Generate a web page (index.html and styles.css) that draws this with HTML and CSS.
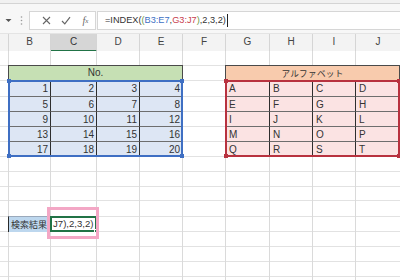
FILE: index.html
```html
<!DOCTYPE html>
<html lang="ja">
<head>
<meta charset="utf-8">
<link rel="stylesheet" href="styles.css">
</head>
<body>
<div class="app">
  <div class="ribbon"></div>
  <div class="fbar">
    <div class="namebox">
      <svg width="7" height="5" viewBox="0 0 7 5"><path d="M0.5 1 L3.5 4 L6.5 1 Z" fill="#555"/></svg>
    </div>
    <div class="sep">
      <svg width="3" height="11" viewBox="0 0 3 11"><circle cx="1.5" cy="2" r="0.8" fill="#9a9a9a"/><circle cx="1.5" cy="5.5" r="0.8" fill="#9a9a9a"/><circle cx="1.5" cy="9" r="0.8" fill="#9a9a9a"/></svg>
    </div>
    <div class="btns">
      <span class="btn"><svg width="9" height="9" viewBox="0 0 9 9"><path d="M1 1 L8 8 M8 1 L1 8" stroke="#666" stroke-width="1.1" fill="none"/></svg></span>
      <span class="btn"><svg width="10" height="9" viewBox="0 0 10 9"><path d="M1 5 L3.8 7.8 L9 1.2" stroke="#666" stroke-width="1.2" fill="none"/></svg></span>
      <span class="btn fx">f<span class="x">x</span></span>
    </div>
    <div class="input">=INDEX(<span class="p">(</span><span class="rb-blue">B3:E7</span>,<span class="rb-red">G3:J7</span><span class="p">)</span>,2,3,2)<span class="caret"></span></div>
  </div>
  <div class="colhead">
    <div class="ch"></div>
    <div class="ch">B</div>
    <div class="ch sel">C</div>
    <div class="ch">D</div>
    <div class="ch">E</div>
    <div class="ch">F</div>
    <div class="ch">G</div>
    <div class="ch">H</div>
    <div class="ch">I</div>
    <div class="ch last">J</div>
  </div>
  <div class="sheet">
    <div class="tbl tbl-no">
      <div class="th th-green">No.</div>
      <div class="td num">1</div><div class="td num">2</div><div class="td num">3</div><div class="td num">4</div>
      <div class="td num">5</div><div class="td num">6</div><div class="td num">7</div><div class="td num">8</div>
      <div class="td num">9</div><div class="td num">10</div><div class="td num">11</div><div class="td num">12</div>
      <div class="td num">13</div><div class="td num">14</div><div class="td num">15</div><div class="td num">16</div>
      <div class="td num">17</div><div class="td num">18</div><div class="td num">19</div><div class="td num">20</div>
      <div class="frame frame-blue">
        <span class="hd tl"></span><span class="hd tr"></span><span class="hd bl"></span><span class="hd br"></span>
      </div>
    </div>
    <div class="tbl tbl-al">
      <div class="th th-orange">アルファベット</div>
      <div class="td txt">A</div><div class="td txt">B</div><div class="td txt">C</div><div class="td txt">D</div>
      <div class="td txt">E</div><div class="td txt">F</div><div class="td txt">G</div><div class="td txt">H</div>
      <div class="td txt">I</div><div class="td txt">J</div><div class="td txt">K</div><div class="td txt">L</div>
      <div class="td txt">M</div><div class="td txt">N</div><div class="td txt">O</div><div class="td txt">P</div>
      <div class="td txt">Q</div><div class="td txt">R</div><div class="td txt">S</div><div class="td txt">T</div>
      <div class="frame frame-red">
        <span class="hd tl"></span><span class="hd tr"></span><span class="hd bl"></span><span class="hd br"></span>
      </div>
    </div>
    <div class="label">検索結果</div>
    <div class="active">J7),2,3,2)<span class="fill"></span></div>
    <div class="annot"></div>
  </div>
</div>
</body>
</html>
```
FILE: styles.css
```css
* {
  box-sizing: border-box;
  margin: 0;
  padding: 0;
}

body {
  margin: 0;
  width: 400px;
  height: 280px;
  overflow: hidden;
  background: #ffffff;
  color: #333333;
  font-family: "Liberation Sans", Arial, "Noto Sans CJK JP", sans-serif;
}

.app {
  width: 400px;
  height: 280px;
  display: flex;
  flex-direction: column;
}

/* ribbon remnant */
.ribbon {
  height: 4px;
  flex: none;
  background: #f1f1f1;
  border-bottom: 1px solid #d4d4d4;
}

/* formula bar */
.fbar {
  height: 29px;
  flex: none;
  background: #f7f7f7;
  display: flex;
  align-items: flex-start;
  padding-top: 7px;
}

.namebox {
  width: 14px;
  height: 19px;
  display: flex;
  align-items: center;
  justify-content: center;
  padding-left: 3px;
}

.sep {
  width: 15px;
  height: 19px;
  display: flex;
  align-items: center;
  justify-content: center;
}

.btns {
  width: 67px;
  height: 19px;
  background: #ffffff;
  border: 1px solid #d6d6d6;
  display: flex;
  align-items: center;
  padding-left: 7px;
}

.btn {
  width: 21px;
  display: flex;
  align-items: center;
  justify-content: center;
}

.fx {
  font-family: "Liberation Serif", serif;
  font-style: italic;
  font-size: 10px;
  color: #666;
  line-height: 10px;
}

.fx .x {
  font-size: 7px;
}

.input {
  flex: 1;
  height: 19px;
  margin-left: 1px;
  background: #ffffff;
  border: 1px solid #d6d6d6;
  border-right: none;
  padding-left: 7px;
  font-size: 9.2px;
  line-height: 17px;
  color: #333;
  display: flex;
  align-items: center;
  white-space: pre;
}

.rb-blue { color: #3d6fc4; }
.rb-red { color: #c8404d; }
.p { color: #6d9b4a; }

.caret {
  display: inline-block;
  width: 1px;
  height: 13px;
  background: #222;
  margin-left: 1px;
}

/* column header */
.colhead {
  height: 18px;
  flex: none;
  display: grid;
  grid-template-columns: 9px 42px 46px 43px 43px 43px 44px 43px 43px 44px;
  background: #f3f3f3;
  border-top: 1px solid #e4e4e4;
}

.ch {
  border-right: 1px solid #d5d5d5;
  border-bottom: 1px solid #c6c6c6;
  text-align: center;
  font-size: 10px;
  line-height: 16px;
  color: #444;
}

.ch.sel {
  background: #d6d6d6;
  border-bottom: 2px solid #217346;
  color: #333;
}

.ch.last {
  border-right: none;
}

/* sheet */
.sheet {
  position: relative;
  flex: 1;
  display: grid;
  grid-template-columns: 9px 42px 46px 43px 43px 43px 44px 43px 43px 44px;
  grid-template-rows: 15px 15px 16px 15px 15px 15px 15px 15px 15px 14px 16px 15px 15px 15px 15px;
  background:
    linear-gradient(#dadada, #dadada) 8px 0 / 1px 100% no-repeat,
    linear-gradient(#dadada, #dadada) 50px 0 / 1px 100% no-repeat,
    linear-gradient(#dadada, #dadada) 96px 0 / 1px 100% no-repeat,
    linear-gradient(#dadada, #dadada) 139px 0 / 1px 100% no-repeat,
    linear-gradient(#dadada, #dadada) 182px 0 / 1px 100% no-repeat,
    linear-gradient(#dadada, #dadada) 225px 0 / 1px 100% no-repeat,
    linear-gradient(#dadada, #dadada) 269px 0 / 1px 100% no-repeat,
    linear-gradient(#dadada, #dadada) 312px 0 / 1px 100% no-repeat,
    linear-gradient(#dadada, #dadada) 355px 0 / 1px 100% no-repeat,
    linear-gradient(#e2e2e2, #e2e2e2) 0 14px / 100% 1px no-repeat,
    linear-gradient(#e2e2e2, #e2e2e2) 0 29px / 100% 1px no-repeat,
    linear-gradient(#e2e2e2, #e2e2e2) 0 45px / 100% 1px no-repeat,
    linear-gradient(#e2e2e2, #e2e2e2) 0 60px / 100% 1px no-repeat,
    linear-gradient(#e2e2e2, #e2e2e2) 0 75px / 100% 1px no-repeat,
    linear-gradient(#e2e2e2, #e2e2e2) 0 90px / 100% 1px no-repeat,
    linear-gradient(#e2e2e2, #e2e2e2) 0 105px / 100% 1px no-repeat,
    linear-gradient(#e2e2e2, #e2e2e2) 0 120px / 100% 1px no-repeat,
    linear-gradient(#e2e2e2, #e2e2e2) 0 135px / 100% 1px no-repeat,
    linear-gradient(#e2e2e2, #e2e2e2) 0 149px / 100% 1px no-repeat,
    linear-gradient(#e2e2e2, #e2e2e2) 0 165px / 100% 1px no-repeat,
    linear-gradient(#e2e2e2, #e2e2e2) 0 180px / 100% 1px no-repeat,
    linear-gradient(#e2e2e2, #e2e2e2) 0 195px / 100% 1px no-repeat,
    linear-gradient(#e2e2e2, #e2e2e2) 0 210px / 100% 1px no-repeat,
    linear-gradient(#e2e2e2, #e2e2e2) 0 225px / 100% 1px no-repeat,
    #ffffff;
}

.tbl {
  position: relative;
  margin: -1px 0 0 -1px;
  border-top: 1px solid #4a4a4a;
  border-left: 1px solid #4a4a4a;
  display: grid;
  grid-template-rows: 15px 16px 15px 15px 15px 15px;
}

.tbl-no {
  grid-column: 2 / 6;
  grid-row: 2 / 8;
  grid-template-columns: 42px 46px 43px 43px;
}

.tbl-al {
  grid-column: 7 / 11;
  grid-row: 2 / 8;
  grid-template-columns: 44px 43px 43px 44px;
}

.th {
  grid-column: 1 / -1;
  border-bottom: 1px solid #4a4a4a;
  border-right: 1px solid #4a4a4a;
  text-align: center;
  font-size: 10px;
  line-height: 14px;
  color: #333;
}

.th-green {
  background: #c6e0b4;
}

.th-orange {
  background: #f8cbad;
  font-family: "Noto Sans CJK JP", sans-serif;
  font-size: 8.6px;
  letter-spacing: 0.3px;
}

.td {
  border-right: 1px solid #2e2e2e;
  border-bottom: 1px solid #6e6e6e;
  font-size: 10px;
  line-height: 15px;
  color: #333;
  white-space: nowrap;
}

.tbl-no .td {
  background: #dde6f4;
}

.tbl-al .td {
  background: #fbe3e3;
}

.num {
  text-align: right;
  padding-right: 2px;
}

.txt {
  text-align: left;
  padding-left: 3px;
}

.frame {
  position: absolute;
  left: -1px;
  top: 14px;
  right: 0;
  bottom: 0;
  border: 2px solid;
  pointer-events: none;
}

.frame-blue {
  border-color: #3f6fc3;
}

.frame-red {
  border-color: #b8323f;
}

.hd {
  position: absolute;
  width: 4px;
  height: 4px;
}

.frame-blue .hd { background: #3f6fc3; }
.frame-red .hd { background: #b8323f; }

.hd.tl { left: -3px; top: -3px; }
.hd.tr { right: -3px; top: -3px; }
.hd.bl { left: -3px; bottom: -3px; }
.hd.br { right: -3px; bottom: -3px; }

.label {
  grid-column: 2;
  grid-row: 12;
  margin: -1px 0 0 -1px;
  background: #bdd7ee;
  border-left: 1px solid #2a2a2a;
  border-top: 1px solid #9aa9bb;
  font-family: "Noto Sans CJK JP", sans-serif;
  font-size: 9px;
  line-height: 15px;
  padding-left: 2px;
  color: #333;
  white-space: nowrap;
}

.active {
  position: relative;
  grid-column: 3;
  grid-row: 12;
  margin: -1px 0 0 -1px;
  border: 2px solid #217346;
  background: #ffffff;
  font-size: 9.6px;
  line-height: 12px;
  padding-left: 1px;
  color: #333;
  white-space: nowrap;
}

.fill {
  position: absolute;
  right: -3px;
  bottom: -3px;
  width: 4px;
  height: 4px;
  background: #217346;
  border: 1px solid #ffffff;
}

.annot {
  position: absolute;
  left: 47px;
  top: 156px;
  width: 52px;
  height: 32px;
  border: 3px solid #f3a7c5;
  pointer-events: none;
}
```
